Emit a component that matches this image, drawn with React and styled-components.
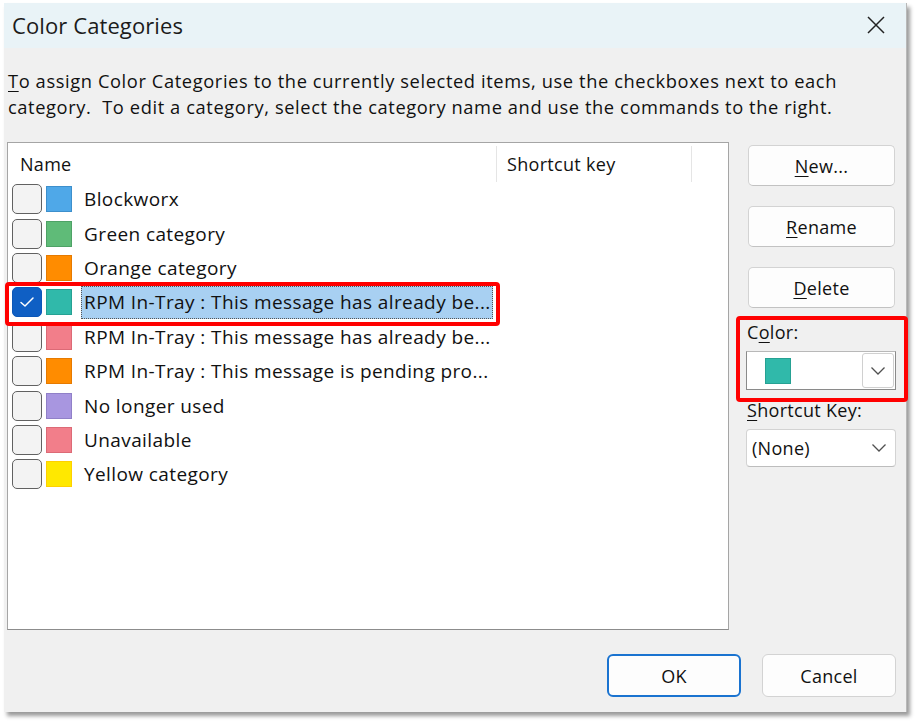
import React from "react";
import styled, { createGlobalStyle } from "styled-components";

const GlobalStyle = createGlobalStyle`
  html, body { margin: 0; padding: 0; background: #ffffff; }
  body { font-family: "Open Sans", "Noto Sans", sans-serif; color: #111111; }
  * { box-sizing: border-box; }
`;

const Page = styled.div`
  width: 920px;
  height: 726px;
  padding: 3px 0 0 4px;
`;

const Dialog = styled.div`
  position: relative;
  width: 903px;
  height: 709px;
  background: #f0f0f0;
  border-right: 1px solid #b8b8b8;
  box-shadow: 3px 4px 4px rgba(0, 0, 0, 0.4);
  display: flex;
  flex-direction: column;
`;

const TitleBar = styled.div`
  height: 45px;
  background: #e9f3f7;
  display: flex;
  align-items: center;
  justify-content: space-between;
  padding: 0 20px 2px 8px;
`;

const Title = styled.div`
  font-size: 22px;
  letter-spacing: 0.1px;
  color: #1b1b1b;
`;

const CloseBtn = styled.div`
  width: 20px;
  height: 20px;
  display: flex;
  align-items: center;
  justify-content: center;
`;

const Body = styled.div`
  flex: 1;
  display: flex;
  flex-direction: column;
  padding: 20px 10px 0 3px;
`;

const Intro = styled.p`
  margin: 0 0 22px 1px;
  font-size: 18.3px;
  letter-spacing: 0.6px;
  line-height: 26px;
  color: #111111;
  white-space: nowrap;
`;

const Main = styled.div`
  display: flex;
  gap: 17px;
`;

const ListBox = styled.div`
  width: 722px;
  height: 488px;
  background: #ffffff;
  border: 1px solid #a5a5a5;
  border-bottom-color: #8c8c8c;
  display: flex;
  flex-direction: column;
`;

const Header = styled.div`
  height: 39px;
  display: grid;
  grid-template-columns: 489px 195px 1fr;
  align-items: stretch;
`;

const HeaderCell = styled.div`
  display: flex;
  align-items: center;
  padding-left: ${(p) => p.$pad}px;
  font-size: 18px;
  letter-spacing: 0.3px;
  color: #111111;
  border-right: ${(p) => (p.$sep ? "1px solid #e5e5e5" : "none")};
  margin: 3px 0 0 0;
`;

const Row = styled.div`
  height: 34.4px;
  display: flex;
  align-items: center;
  padding-left: 4px;
`;

const Check = styled.div`
  width: 30px;
  height: 30px;
  border-radius: 5px;
  border: ${(p) => (p.$on ? "1px solid #0b57b8" : "1.5px solid #616161")};
  background: ${(p) => (p.$on ? "#0f5fc4" : "#f3f3f3")};
  display: flex;
  align-items: center;
  justify-content: center;
  flex-shrink: 0;
`;

const Swatch = styled.div`
  width: ${(p) => p.$size || 26}px;
  height: ${(p) => p.$size || 26}px;
  margin-left: ${(p) => p.$ml ?? 4}px;
  background: ${(p) => p.$color};
  border: 1px solid ${(p) => p.$border};
  flex-shrink: 0;
`;

const RowLabel = styled.div`
  margin-left: 9px;
  width: 412px;
  height: 33px;
  display: flex;
  align-items: center;
  padding-left: 3px;
  font-size: 19px;
  letter-spacing: 0.4px;
  white-space: nowrap;
  overflow: hidden;
  color: #111111;
  background: ${(p) => (p.$sel ? "#a8d0f2" : "transparent")};
  outline: ${(p) => (p.$sel ? "1px dotted #555" : "none")};
  outline-offset: -1px;
`;

const Side = styled.div`
  width: 150px;
  display: flex;
  flex-direction: column;
  padding-top: 3px;
`;

const SideButton = styled.div`
  width: 147px;
  height: 41px;
  margin-left: 2px;
  margin-bottom: ${(p) => p.$mb ?? 20}px;
  background: #fdfdfd;
  border: 1px solid #d3d3d3;
  border-bottom-color: #c2c2c2;
  border-radius: 5px;
  display: flex;
  align-items: center;
  justify-content: center;
  font-size: 18px;
  letter-spacing: 0.3px;
  color: #111111;
`;

const Acc = styled.span`
  text-decoration: underline;
  text-underline-offset: 3px;
  text-decoration-thickness: 1px;
`;

const FieldLabel = styled.div`
  font-size: 18px;
  letter-spacing: 0.3px;
  margin: ${(p) => p.$m};
  padding-left: 1px;
  color: #111111;
  line-height: 24px;
`;

const ColorSelect = styled.div`
  height: 39px;
  width: 150px;
  background: #ffffff;
  border: 1px solid #8a8a8a;
  border-top-color: #b8b8b8;
  display: flex;
  align-items: center;
  justify-content: space-between;
  padding: 0 1px 0 18px;
`;

const DropBtn = styled.div`
  width: 32px;
  height: 35px;
  border: 1px solid #d0d0d0;
  border-radius: 3px;
  background: #fff;
  display: flex;
  align-items: center;
  justify-content: center;
`;

const KeySelect = styled.div`
  height: 38px;
  width: 150px;
  background: #ffffff;
  border: 1px solid #d3d3d3;
  border-bottom-color: #bdbdbd;
  border-radius: 4px;
  display: flex;
  align-items: center;
  justify-content: space-between;
  padding: 0 8px 0 5px;
  font-size: 18px;
  letter-spacing: 0.3px;
  color: #111111;
`;

const Footer = styled.div`
  display: flex;
  justify-content: flex-end;
  gap: 21px;
  padding: 24px 0 0 0;
`;

const FootButton = styled.div`
  width: 134px;
  height: 43px;
  border-radius: 6px;
  background: #fdfdfd;
  border: ${(p) => (p.$primary ? "2px solid #1a73d0" : "1px solid #d3d3d3")};
  display: flex;
  align-items: center;
  justify-content: center;
  font-size: 18px;
  letter-spacing: 0.3px;
  color: #111111;
`;

const Highlight = styled.div`
  position: absolute;
  left: ${(p) => p.$x}px;
  top: ${(p) => p.$y}px;
  width: ${(p) => p.$w}px;
  height: ${(p) => p.$h}px;
  border: 4px solid #ff0000;
  border-radius: 4px;
  pointer-events: none;
`;

const Chevron = () => (
  <svg width="16" height="10" viewBox="0 0 16 10">
    <path d="M1.5 1.5 L8 8 L14.5 1.5" fill="none" stroke="#505050" strokeWidth="1.3" />
  </svg>
);

const Tick = () => (
  <svg width="18" height="14" viewBox="0 0 18 14">
    <path d="M3 7.5 L7 11 L15 3" fill="none" stroke="#ffffff" strokeWidth="1.5" strokeLinecap="round" strokeLinejoin="round" />
  </svg>
);

const categories = [
  { name: "Blockworx", color: "#4fa8e8", border: "#3d8fcc" },
  { name: "Green category", color: "#5fbb78", border: "#4ea266" },
  { name: "Orange category", color: "#ff8c00", border: "#e67a00" },
  { name: "RPM In-Tray : This message has already be...", color: "#30b9aa", border: "#26a193", selected: true },
  { name: "RPM In-Tray : This message has already be...", color: "#f27e8a", border: "#dc6a76" },
  { name: "RPM In-Tray : This message is pending pro...", color: "#ff8c00", border: "#e67a00" },
  { name: "No longer used", color: "#a896e0", border: "#9080c8" },
  { name: "Unavailable", color: "#f27e8a", border: "#dc6a76" },
  { name: "Yellow category", color: "#ffe800", border: "#ffd000" },
];

export default function App() {
  return (
    <>
      <GlobalStyle />
      <Page>
        <Dialog>
          <TitleBar>
            <Title>Color Categories</Title>
            <CloseBtn>
              <svg width="18" height="18" viewBox="0 0 18 18">
                <path d="M1 1 L17 17 M17 1 L1 17" stroke="#222" strokeWidth="1.5" />
              </svg>
            </CloseBtn>
          </TitleBar>
          <Body>
            <Intro>
              <Acc>T</Acc>o assign Color Categories to the currently selected items, use the checkboxes next to each
              <br />
              category.&nbsp; To edit a category, select the category name and use the commands to the right.
            </Intro>
            <Main>
              <ListBox>
                <Header>
                  <HeaderCell $pad={12} $sep>Name</HeaderCell>
                  <HeaderCell $pad={10} $sep>Shortcut key</HeaderCell>
                  <HeaderCell $pad={0} />
                </Header>
                {categories.map((c, i) => (
                  <Row key={i}>
                    <Check $on={c.selected}>{c.selected && <Tick />}</Check>
                    <Swatch $color={c.color} $border={c.border} />
                    <RowLabel $sel={c.selected}>{c.name}</RowLabel>
                  </Row>
                ))}
              </ListBox>
              <Side>
                <SideButton>
                  <span><Acc>N</Acc>ew...</span>
                </SideButton>
                <SideButton>
                  <span><Acc>R</Acc>ename</span>
                </SideButton>
                <SideButton $mb={12}>
                  <span><Acc>D</Acc>elete</span>
                </SideButton>
                <FieldLabel $m="0 0 7px 0">
                  C<Acc>o</Acc>lor:
                </FieldLabel>
                <ColorSelect>
                  <Swatch $color="#30b9aa" $border="#26a193" $ml={0} />
                  <DropBtn>
                    <Chevron />
                  </DropBtn>
                </ColorSelect>
                <FieldLabel $m="8px 0 7px 0">
                  <Acc>S</Acc>hortcut Key:
                </FieldLabel>
                <KeySelect>
                  <span>(None)</span>
                  <Chevron />
                </KeySelect>
              </Side>
            </Main>
            <Footer>
              <FootButton $primary>OK</FootButton>
              <FootButton>Cancel</FootButton>
            </Footer>
          </Body>
          <Highlight $x={1} $y={279} $w={495} $h={44} />
          <Highlight $x={732} $y={313} $w={172} $h={86} />
        </Dialog>
      </Page>
    </>
  );
}
